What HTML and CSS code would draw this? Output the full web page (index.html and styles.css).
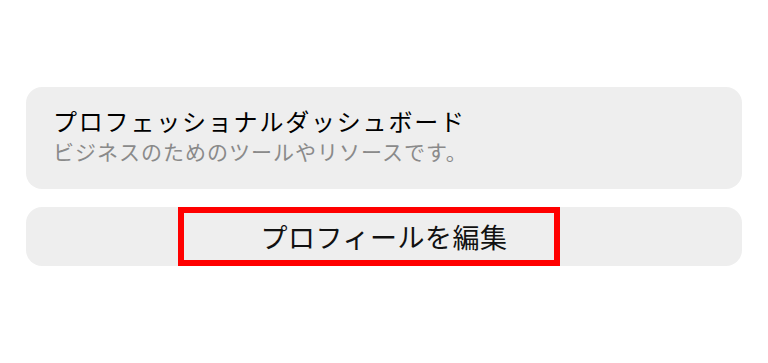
FILE: index.html
```html
<!DOCTYPE html>
<html lang="ja">
<head>
<meta charset="utf-8">
<link rel="stylesheet" href="styles.css">
</head>
<body>
<div class="page">
  <div class="card info">
    <div class="title">プロフェッショナルダッシュボード</div>
    <div class="subtitle">ビジネスのためのツールやリソースです。</div>
  </div>
  <div class="card button">
    <span class="btn-label">プロフィールを編集</span>
    <div class="highlight"></div>
  </div>
</div>
</body>
</html>
```

FILE: styles.css
```css
html, body {
  margin: 0;
  padding: 0;
  background: #ffffff;
}
body {
  width: 768px;
  height: 363px;
  overflow: hidden;
  font-family: "Noto Sans CJK JP", "Noto Sans", sans-serif;
}
.page {
  padding: 87px 26px 0 26px;
  display: flex;
  flex-direction: column;
  gap: 18px;
}
.card {
  background: #eeeeee;
  border-radius: 16px;
}
.info {
  height: 102px;
  box-sizing: border-box;
  padding: 18px 0 0 27px;
  display: flex;
  flex-direction: column;
}
.title {
  font-size: 24px;
  line-height: 32px;
  letter-spacing: 1.8px;
  color: #000000;
}
.subtitle {
  font-size: 21px;
  line-height: 28px;
  letter-spacing: 1px;
  color: #8a8a8a;
}
.button {
  position: relative;
  height: 59px;
  display: flex;
  align-items: center;
  justify-content: center;
}
.btn-label {
  font-size: 27px;
  letter-spacing: 0.5px;
  color: #111111;
}
.highlight {
  position: absolute;
  left: 152px;
  top: 0;
  width: 382px;
  height: 59px;
  box-sizing: border-box;
  border: 6px solid #ff0000;
}
```
